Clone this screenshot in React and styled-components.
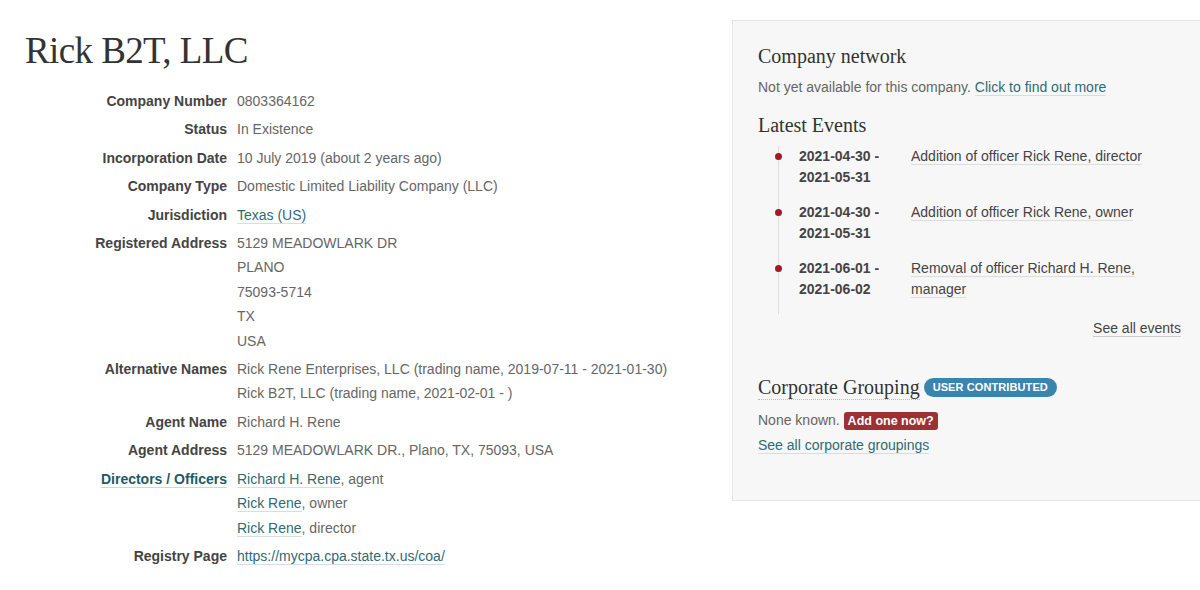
import styled, { createGlobalStyle } from 'styled-components'

const Global = createGlobalStyle`
  body {
    margin: 0;
    background: #fff;
    font-family: "Liberation Sans", Arial, sans-serif;
    font-size: 14px;
    color: #555;
    overflow: hidden;
  }
`

const Page = styled.div`
  display: flex;
  align-items: flex-start;
  width: 1210px;
`

const Main = styled.div`
  flex: 0 0 732px;
`

const Title = styled.h1`
  margin: 0;
  padding: 29px 0 0 25px;
  font-family: "Liberation Serif", "Times New Roman", serif;
  font-weight: normal;
  font-size: 37px;
  line-height: 44px;
  letter-spacing: -0.6px;
  color: #333;
`

const Details = styled.dl`
  display: grid;
  grid-template-columns: 227px 1fr;
  column-gap: 10px;
  row-gap: 4px;
  margin: 16px 0 0;
  line-height: 24.4px;
`

const Label = styled.dt`
  text-align: right;
  font-weight: bold;
  color: ${p => (p.$link ? '#1d5a64' : '#444')};
`

const LabelLink = styled.a`
  color: inherit;
  text-decoration: none;
  border-bottom: 1px solid #c9dadd;
`

const Value = styled.dd`
  margin: 0;
  color: #666;
`

const Line = styled.div``

const Link = styled.a`
  color: #2f6b75;
  text-decoration: none;
  border-bottom: 1px solid #d3e0e2;
`

const Panel = styled.aside`
  flex: 0 0 475px;
  box-sizing: border-box;
  margin-top: 20px;
  min-height: 481px;
  padding: 23px 25px 40px;
  background: #f7f7f7;
  border: 1px solid #e6e6e6;
`

const Heading = styled.h3`
  display: inline-block;
  margin: 0;
  font-family: "Liberation Serif", "Times New Roman", serif;
  font-weight: normal;
  font-size: 20px;
  line-height: 24px;
  color: #333;
  border-bottom: ${p => (p.$dotted ? '1px dotted #bbb' : 'none')};
`

const Text = styled.p`
  margin: ${p => p.$mt || 0}px 0 0;
  line-height: 22px;
  color: #666;
`

const Events = styled.ul`
  position: relative;
  list-style: none;
  margin: 8px 0 0;
  padding: 0 0 14px 41px;

  &::before {
    content: '';
    position: absolute;
    left: 20px;
    top: 0;
    bottom: 0;
    width: 1px;
    background: #ddd;
  }
`

const Event = styled.li`
  position: relative;
  display: grid;
  grid-template-columns: 112px 1fr;
  line-height: 21px;
  margin-bottom: 14px;

  &:last-child {
    margin-bottom: 0;
  }

  &::before {
    content: '';
    position: absolute;
    left: -24px;
    top: 7px;
    width: 7px;
    height: 7px;
    border-radius: 50%;
    background: #a3182f;
  }
`

const EventDate = styled.span`
  font-weight: bold;
  color: #444;
`

const EventText = styled.span`
  color: #444;
`

const EventLink = styled.a`
  color: inherit;
  text-decoration: none;
  border-bottom: 1px solid #ddd;
`

const More = styled.div`
  text-align: right;
  margin-top: 4px;
  line-height: 20px;
`

const PlainLink = styled.a`
  color: #444;
  text-decoration: none;
  border-bottom: 1px solid #ccc;
`

const Grouping = styled.div`
  margin-top: 37px;
  display: flex;
  align-items: center;
  gap: 4px;
`

const Badge = styled.span`
  display: inline-block;
  padding: 0 9px;
  font-size: 11px;
  font-weight: bold;
  line-height: 19px;
  letter-spacing: 0.1px;
  color: #fff;
  background: #3a85ae;
  border-radius: 10px;
`

const Action = styled.span`
  display: inline-block;
  padding: 0 4px;
  font-size: 12.5px;
  font-weight: bold;
  line-height: 18px;
  color: #fff;
  background: #9c3034;
  border-radius: 3px;
`

const details = [
  ['Company Number', ['0803364162']],
  ['Status', ['In Existence']],
  ['Incorporation Date', ['10 July 2019 (about 2 years ago)']],
  ['Company Type', ['Domestic Limited Liability Company (LLC)']],
  ['Jurisdiction', [<Link href="#">Texas (US)</Link>]],
  ['Registered Address', ['5129 MEADOWLARK DR', 'PLANO', '75093-5714', 'TX', 'USA']],
  ['Alternative Names', [
    'Rick Rene Enterprises, LLC (trading name, 2019-07-11 - 2021-01-30)',
    'Rick B2T, LLC (trading name, 2021-02-01 - )',
  ]],
  ['Agent Name', ['Richard H. Rene']],
  ['Agent Address', ['5129 MEADOWLARK DR., Plano, TX, 75093, USA']],
  ['Directors / Officers', [
    <><Link href="#">Richard H. Rene</Link>, agent</>,
    <><Link href="#">Rick Rene</Link>, owner</>,
    <><Link href="#">Rick Rene</Link>, director</>,
  ], true],
  ['Registry Page', [<Link href="#">https://mycpa.cpa.state.tx.us/coa/</Link>]],
]

const events = [
  ['2021-04-30 -', '2021-05-31', 'Addition of officer Rick Rene, director'],
  ['2021-04-30 -', '2021-05-31', 'Addition of officer Rick Rene, owner'],
  ['2021-06-01 -', '2021-06-02', 'Removal of officer Richard H. Rene, manager'],
]

export default function App() {
  return (
    <>
      <Global />
      <Page>
        <Main>
          <Title>Rick B2T, LLC</Title>
          <Details>
            {details.map(([label, lines, isLink]) => (
              <>
                <Label key={label + 'l'} $link={isLink}>
                  {isLink ? <LabelLink href="#">{label}</LabelLink> : label}
                </Label>
                <Value key={label + 'v'}>
                  {lines.map((l, i) => <Line key={i}>{l}</Line>)}
                </Value>
              </>
            ))}
          </Details>
        </Main>
        <Panel>
          <Heading>Company network</Heading>
          <Text $mt={8}>
            Not yet available for this company. <Link href="#">Click to find out more</Link>
          </Text>
          <Text $mt={15}><Heading>Latest Events</Heading></Text>
          <Events>
            {events.map(([a, b, text], i) => (
              <Event key={i}>
                <EventDate>{a}<br />{b}</EventDate>
                <EventText><EventLink href="#">{text}</EventLink></EventText>
              </Event>
            ))}
          </Events>
          <More><PlainLink href="#">See all events</PlainLink></More>
          <Grouping>
            <Heading $dotted>Corporate Grouping</Heading>
            <Badge>USER CONTRIBUTED</Badge>
          </Grouping>
          <Text $mt={9}>None known. <Action>Add one now?</Action></Text>
          <Text $mt={3}><Link href="#">See all corporate groupings</Link></Text>
        </Panel>
      </Page>
    </>
  )
}
